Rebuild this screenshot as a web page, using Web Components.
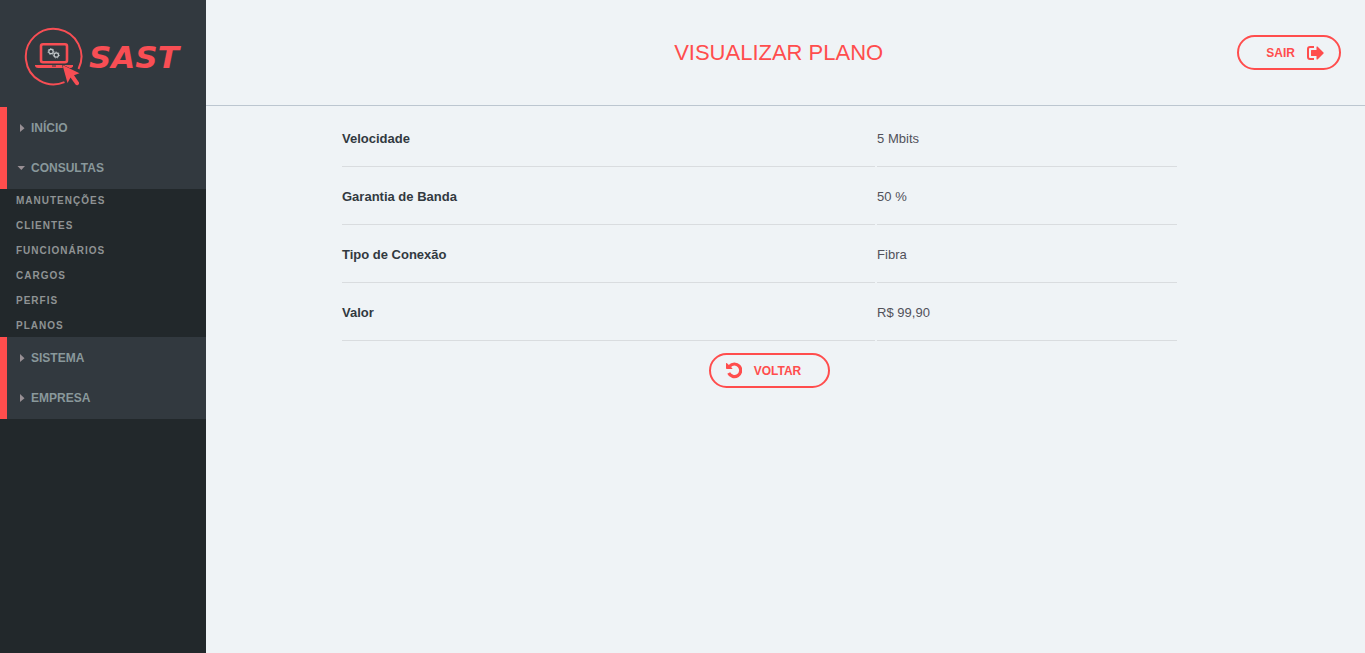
<!DOCTYPE html>
<html lang="pt-BR">
<head>
<meta charset="utf-8">
<meta name="viewport" content="width=device-width, initial-scale=1">
<title>SAST - Visualizar Plano</title>
<style>
html, body { height: 100%; }
body {
  margin: 0;
  font-family: "Liberation Sans", Arial, sans-serif;
  background: #eff3f6;
  --accent: #ff4d4d;
  --panel: #32393f;
  --dark: #22282b;
}
</style>
</head>
<body>
<sast-app>
  <sast-sidebar slot="side">
    <sast-logo></sast-logo>
    <nav-group>
      <nav-item>INÍCIO</nav-item>
      <nav-item open>CONSULTAS</nav-item>
    </nav-group>
    <nav-submenu items="MANUTENÇÕES,CLIENTES,FUNCIONÁRIOS,CARGOS,PERFIS,PLANOS"></nav-submenu>
    <nav-group>
      <nav-item>SISTEMA</nav-item>
      <nav-item>EMPRESA</nav-item>
    </nav-group>
  </sast-sidebar>
  <page-header>
    VISUALIZAR PLANO
    <pill-button slot="action" class="exit">SAIR
      <svg slot="end" width="17" height="14" viewBox="0 0 17 14" aria-hidden="true"><path d="M7 1H3Q1 1 1 3V11Q1 13 3 13H7" fill="none" stroke="#ff4d4d" stroke-width="2"/><path d="M4.500 4H9.500V.8Q10 .2 10.500 .6L16.500 6.400Q17 7 16.500 7.600L10.500 13.400Q10 13.800 9.500 13.200V10H4.500Q4 10 4 9.500V4.500Q4 4 4.500 4Z" fill="#ff4d4d"/></svg>
    </pill-button>
  </page-header>
  <plan-details></plan-details>
</sast-app>

<script>
const define = (name, html, setup) => {
  const template = document.createElement('template');
  template.innerHTML = html;
  customElements.define(name, class extends HTMLElement {
    constructor() {
      super();
      this.attachShadow({ mode: 'open' }).append(template.content.cloneNode(true));
    }
    connectedCallback() {
      if (setup && !this.ready) { this.ready = true; setup(this, this.shadowRoot); }
    }
  });
};

define('sast-app', `
<style>
:host { display: grid; grid-template-columns: 206px minmax(0, 1fr); min-height: 100vh; }
main { min-width: 0; }
</style>
<slot name="side"></slot>
<main><slot></slot></main>`);

define('sast-sidebar', `
<style>:host { display: block; background: var(--dark); }</style>
<slot></slot>`);

define('sast-logo', `
<style>
:host { display: flex; align-items: center; gap: 6px; height: 107px; padding: 6px 0 0 24px; box-sizing: border-box; background: var(--panel); color: #f84e54; }
svg { flex: none; }
span { font: italic bold 31px/36px "DejaVu Sans", sans-serif; }
</style>
<svg width="59" height="60" viewBox="0 0 59 60" aria-hidden="true">
  <path d="M54.500 42A27.800 27.800 0 1 0 40.500 55.200" fill="none" stroke="#f84e54" stroke-width="2"/>
  <rect x="17" y="17.200" width="26" height="18" rx="2" fill="none" stroke="#f84e54" stroke-width="2.600"/>
  <path d="M11 38H49V39.500Q48 41 46 41H14Q11.500 41 11 39Z" fill="#f84e54"/>
  <path d="M28 39h4" stroke="#32393f" stroke-width="1"/>
  <g fill="none" stroke="#c3c9cc"><circle cx="27" cy="24.500" r="2.200" stroke-width="1.200"/><circle cx="27" cy="24.500" r="3" stroke-dasharray="1.100 1.500"/><circle cx="32.300" cy="28" r="2.200" stroke-width="1.200"/><circle cx="32.300" cy="28" r="3" stroke-dasharray="1.100 1.500"/></g>
  <path d="M38.500 38L55.500 46.300L50 48.300L55 55.500Q55.500 57 54 58Q52.500 58.600 51.500 57.500L46.500 50.500L43.500 56Z" fill="#f84e54" stroke="#32393f" stroke-width="1" paint-order="stroke"/>
</svg>
<span>SAST</span>`);

define('nav-group', `
<style>:host { display: block; padding: 1px 0; border-left: 7px solid var(--accent); background: var(--panel); }</style>
<slot></slot>`);

define('nav-item', `
<style>
:host { display: block; }
button { display: flex; align-items: center; gap: 6px; width: 100%; height: 40px; margin: 0; padding: 0 0 0 10px; border: 0; background: none; color: #89989b; font: bold 12px/16px "Liberation Sans", Arial, sans-serif; cursor: pointer; }
svg { flex: none; }
</style>
<button type="button" aria-expanded="false">
  <svg width="8" height="8" viewBox="0 0 8 8" aria-hidden="true"><path d="M3 0L7.500 4.200L3 8Z" fill="#988f94"/></svg>
  <slot></slot>
</button>`, (el, root) => {
  if (el.hasAttribute('open')) {
    root.querySelector('button').setAttribute('aria-expanded', 'true');
    root.querySelector('path').setAttribute('d', 'M0.500 2H8L4.300 6Z');
  }
});

define('nav-submenu', `
<style>
:host { display: block; }
ul { display: grid; gap: 2px; margin: 0; padding: 0 0 0 16px; list-style: none; }
a { display: block; color: #8f9394; font-size: 10px; line-height: 23px; font-weight: bold; letter-spacing: 1px; text-decoration: none; }
</style>
<ul></ul>`, (el, root) => {
  for (const name of el.getAttribute('items').split(',')) {
    const li = document.createElement('li');
    const a = document.createElement('a');
    a.href = '#';
    a.textContent = name;
    li.append(a);
    root.querySelector('ul').append(li);
  }
});

define('page-header', `
<style>
header { display: flex; align-items: center; height: 105px; padding: 0 24px 0 114px; border-bottom: 1px solid #bcc6d0; }
h1 { flex: 1; margin: 0; text-align: center; font-size: 22px; line-height: 26px; font-weight: normal; color: var(--accent); }
</style>
<header><h1><slot></slot></h1><slot name="action"></slot></header>`);

define('pill-button', `
<style>
:host { display: inline-block; }
button { display: flex; align-items: center; gap: 12px; height: 35px; margin: 0; padding: 0 27px 0 15px; border: 2px solid var(--accent); border-radius: 18px; background: none; color: var(--accent); font: bold 12px/16px "Liberation Sans", Arial, sans-serif; cursor: pointer; }
:host(.exit) button { padding: 0 15px 0 27px; }
</style>
<button type="button"><slot name="start"></slot><span><slot></slot></span><slot name="end"></slot></button>`);

define('plan-details', `
<style>
:host { display: block; padding: 3px 186px 0 134px; }
table { width: 100%; border-collapse: separate; border-spacing: 2px; table-layout: fixed; font-size: 13px; line-height: 16px; }
th, td { height: 55px; padding: 0; border-bottom: 1px solid #d9dcdf; text-align: left; vertical-align: middle; }
th { width: 64%; color: #32393f; font-weight: bold; }
td { color: #51515a; }
.actions { display: flex; justify-content: center; padding: 10px 0 0 20px; }
</style>
<table><tbody>
  <tr><th scope="row">Velocidade</th><td>5 Mbits</td></tr>
  <tr><th scope="row">Garantia de Banda</th><td>50 %</td></tr>
  <tr><th scope="row">Tipo de Conexão</th><td>Fibra</td></tr>
  <tr><th scope="row">Valor</th><td>R$ 99,90</td></tr>
</tbody></table>
<div class="actions">
  <pill-button><svg slot="start" width="16" height="18" viewBox="0 0 16 18" aria-hidden="true"><path d="M3.600 4.200A6.300 6.300 0 1 1 2.700 11" fill="none" stroke="#ff4d4d" stroke-width="3.200"/><path d="M0 1.200Q.5 .7 1 1.200L6.300 6.300Q6.700 7 6 7H.8Q0 7 0 6.200Z" fill="#ff4d4d"/></svg>VOLTAR</pill-button>
</div>`);
</script>
</body>
</html>
